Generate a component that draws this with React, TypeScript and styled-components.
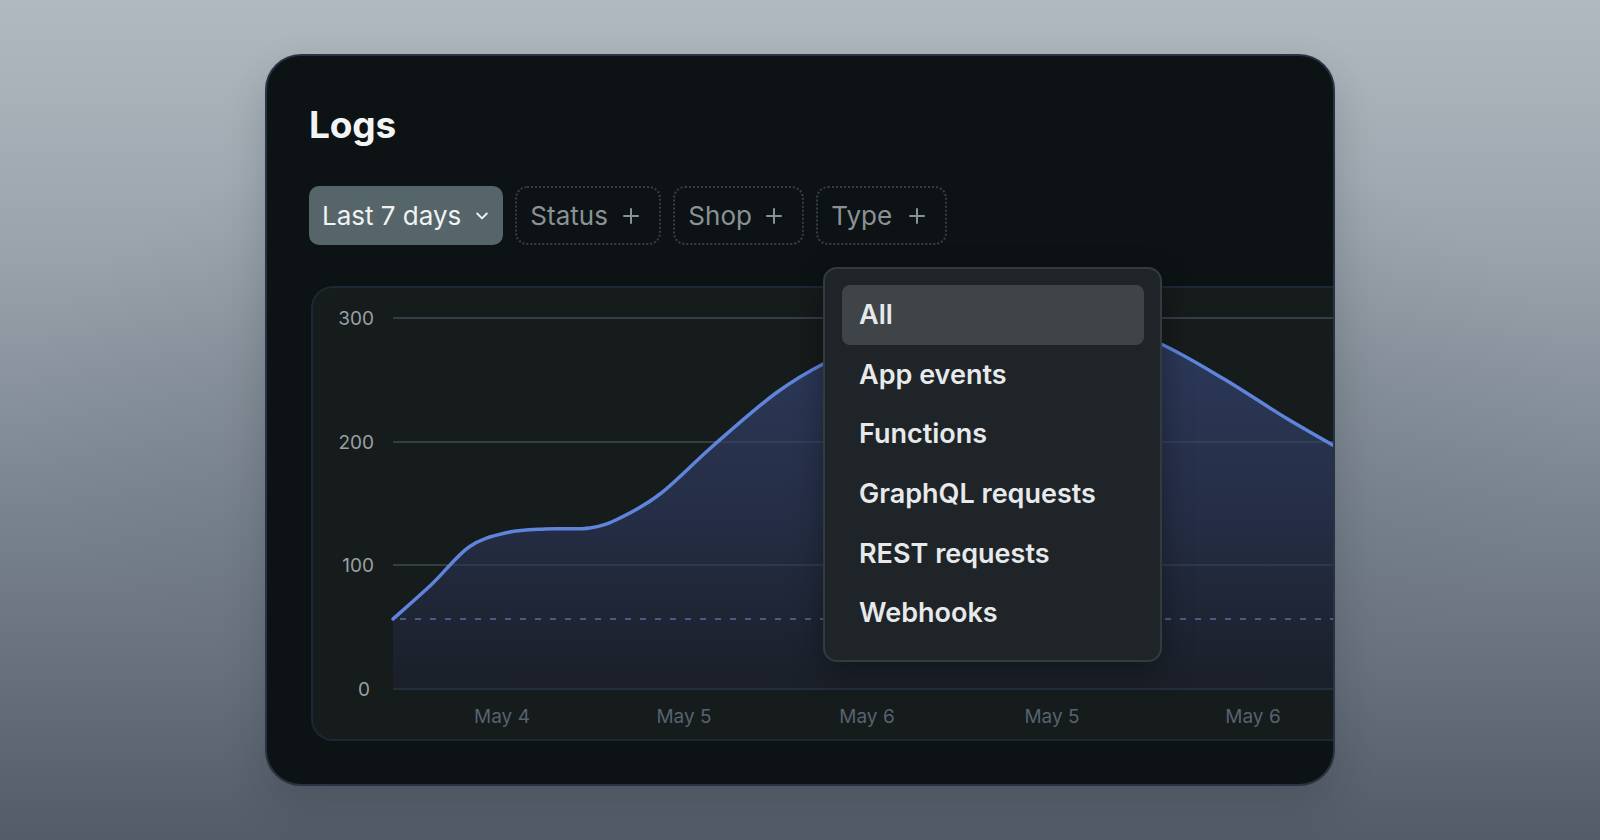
import React from "react";
import styled, { createGlobalStyle } from "styled-components";

const GlobalStyle = createGlobalStyle`
  html, body { margin: 0; padding: 0; }
  body {
    font-family: "Inter", "Noto Sans", sans-serif;
    background: #6f7984;
  }
  * { box-sizing: border-box; }
`;

const Page = styled.div`
  width: 1600px;
  height: 840px;
  overflow: hidden;
  display: flex;
  justify-content: center;
  align-items: flex-start;
  padding-top: 54px;
  background:
    radial-gradient(ellipse 70% 60% at 50% 50%, rgba(60, 70, 82, 0.25), rgba(60, 70, 82, 0) 70%),
    linear-gradient(180deg, #b1b9c0 0%, #9aa3ac 30%, #7a848f 60%, #535b67 100%);
`;

const Card = styled.section`
  position: relative;
  width: 1070px;
  height: 732px;
  border: 2px solid #283244;
  border-radius: 36px;
  background: #0d1214;
  overflow: hidden;
  display: flex;
  flex-direction: column;
  padding: 51px 0 43px 42px;
  box-shadow: 0 18px 40px rgba(20, 26, 34, 0.18);
`;

const Title = styled.h1`
  margin: 0;
  font-size: 37px;
  line-height: 36px;
  font-weight: 700;
  color: #f3f5f5;
  letter-spacing: -0.2px;
`;

const FilterRow = styled.div`
  display: flex;
  gap: 12px;
  margin-top: 43px;
  height: 59px;
`;

const SelectButton = styled.button`
  display: flex;
  align-items: center;
  gap: 15px;
  height: 59px;
  padding: 0 15px 0 13px;
  border: none;
  border-radius: 10px;
  background: #56656a;
  color: #f1f3f3;
  font-family: inherit;
  font-size: 26px;
  font-weight: 400;
`;

const AddFilter = styled.button<{ $w: number }>`
  display: flex;
  align-items: center;
  justify-content: space-between;
  width: ${(p) => p.$w}px;
  height: 59px;
  padding: 0 20px 0 13px;
  border: 2px dotted #363e42;
  border-radius: 12px;
  background: transparent;
  color: #8a9295;
  font-family: inherit;
  font-size: 26px;
  font-weight: 400;
`;

const ChartPanel = styled.div`
  margin-top: 41px;
  margin-left: 2px;
  height: 455px;
  border: 2px solid #1d2836;
  border-right: none;
  border-radius: 22px 0 0 22px;
  background: #161b1c;
  overflow: hidden;
`;

const ChartSvg = styled.svg`
  display: block;
  width: 1020px;
  height: 451px;
  font-family: "Inter", "Noto Sans", sans-serif;
`;

const Menu = styled.div`
  position: absolute;
  left: 556px;
  top: 211px;
  width: 339px;
  padding: 16px 16px 17px 17px;
  border: 2px solid #343b3e;
  border-radius: 14px;
  background: #1e2427;
  box-shadow: 0 10px 30px rgba(0, 0, 0, 0.35);
  display: flex;
  flex-direction: column;
`;

const MenuItem = styled.div<{ $active?: boolean }>`
  display: flex;
  align-items: center;
  height: 59.6px;
  padding-left: 17px;
  border-radius: 8px;
  background: ${(p) => (p.$active ? "#3e4447" : "transparent")};
  color: #e7e9ea;
  font-size: 27px;
  font-weight: 600;
`;

const Chevron = () => (
  <svg width="12" height="8" viewBox="0 0 12 8" fill="none">
    <path d="M1.2 1.5 L6 6.3 L10.8 1.5" stroke="#f1f3f3" strokeWidth="1.9" strokeLinecap="round" strokeLinejoin="round" />
  </svg>
);

const PlusIcon = () => (
  <svg width="16" height="16" viewBox="0 0 16 16" fill="none">
    <path d="M8 1 V15 M1 8 H15" stroke="#8a9295" strokeWidth="2" strokeLinecap="round" />
  </svg>
);

const points: [number, number][] = [
  [393, 619],
  [432, 584],
  [469, 547],
  [505, 533],
  [545, 529],
  [590, 528],
  [620, 518],
  [660, 494],
  [714, 445],
  [776, 393],
  [827, 362],
  [900, 330],
  [1000, 312],
  [1100, 322],
  [1161, 344],
  [1224, 379],
  [1286, 418],
  [1345, 452],
];

function smoothPath(pts: [number, number][]): string {
  let d = `M ${pts[0][0]} ${pts[0][1]}`;
  for (let i = 0; i < pts.length - 1; i++) {
    const p0 = pts[i - 1] || pts[i];
    const p1 = pts[i];
    const p2 = pts[i + 1];
    const p3 = pts[i + 2] || p2;
    const c1x = p1[0] + (p2[0] - p0[0]) / 6;
    const c1y = p1[1] + (p2[1] - p0[1]) / 6;
    const c2x = p2[0] - (p3[0] - p1[0]) / 6;
    const c2y = p2[1] - (p3[1] - p1[1]) / 6;
    d += ` C ${c1x.toFixed(1)} ${c1y.toFixed(1)}, ${c2x.toFixed(1)} ${c2y.toFixed(1)}, ${p2[0]} ${p2[1]}`;
  }
  return d;
}

const linePath = smoothPath(points);
const areaPath = `${linePath} L 1345 689 L 393 689 Z`;

const gridY = [
  { y: 318, label: "300" },
  { y: 442, label: "200" },
  { y: 565, label: "100" },
];

const xLabels = [
  { x: 502, label: "May 4" },
  { x: 684, label: "May 5" },
  { x: 867, label: "May 6" },
  { x: 1052, label: "May 5" },
  { x: 1253, label: "May 6" },
];

const menuItems = ["All", "App events", "Functions", "GraphQL requests", "REST requests", "Webhooks"];

export default function App() {
  return (
    <>
      <GlobalStyle />
      <Page>
        <Card>
          <Title>Logs</Title>
          <FilterRow>
            <SelectButton>
              Last 7 days
              <Chevron />
            </SelectButton>
            <AddFilter $w={146}>
              Status
              <PlusIcon />
            </AddFilter>
            <AddFilter $w={131}>
              Shop
              <PlusIcon />
            </AddFilter>
            <AddFilter $w={131}>
              Type
              <PlusIcon />
            </AddFilter>
          </FilterRow>
          <ChartPanel>
            <ChartSvg viewBox="313 288 1020 451">
              <defs>
                <linearGradient id="area" x1="0" y1="320" x2="0" y2="689" gradientUnits="userSpaceOnUse">
                  <stop offset="0" stopColor="#2d3a5c" />
                  <stop offset="0.55" stopColor="#242d44" />
                  <stop offset="1" stopColor="#1a1f28" />
                </linearGradient>
              </defs>
              {gridY.map((g) => (
                <line key={g.label} x1={393} x2={1345} y1={g.y} y2={g.y} stroke="#2a3033" strokeWidth={2} />
              ))}
              <path d={areaPath} fill="url(#area)" />
              {gridY.map((g) => (
                <line key={"o" + g.label} x1={393} x2={1345} y1={g.y} y2={g.y} stroke="rgba(80,92,120,0.3)" strokeWidth={2} />
              ))}
              <line x1={393} x2={1345} y1={689} y2={689} stroke="#222d3e" strokeWidth={2} />
              <line x1={400} x2={1345} y1={619} y2={619} stroke="#4b5a88" strokeWidth={2} strokeDasharray="6 9" />
              <path d={linePath} fill="none" stroke="#5e84dc" strokeWidth={3.5} strokeLinecap="round" />
              {gridY.map((g) => (
                <text key={"t" + g.label} x={374} y={g.y + 7} textAnchor="end" fontSize={19} fill="#9aa0a3">
                  {g.label}
                </text>
              ))}
              <text x={370} y={696} textAnchor="end" fontSize={19} fill="#9aa0a3">
                0
              </text>
              {xLabels.map((l, i) => (
                <text key={i} x={l.x} y={723} textAnchor="middle" fontSize={19} fill="#566371">
                  {l.label}
                </text>
              ))}
            </ChartSvg>
          </ChartPanel>
          <Menu>
            {menuItems.map((m, i) => (
              <MenuItem key={m} $active={i === 0}>
                {m}
              </MenuItem>
            ))}
          </Menu>
        </Card>
      </Page>
    </>
  );
}
